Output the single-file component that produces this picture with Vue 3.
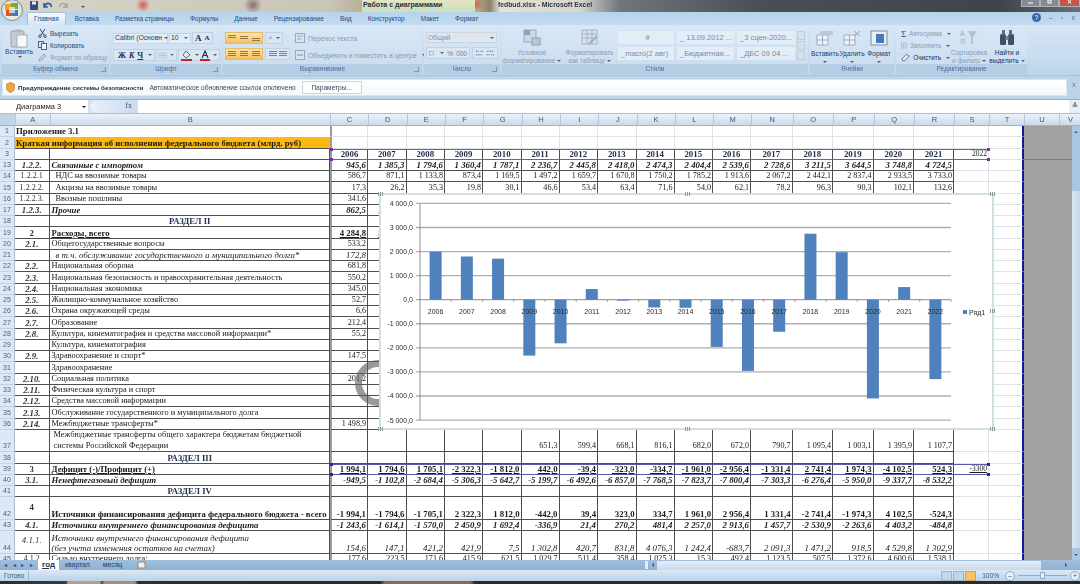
<script setup>
const split = (s) => s.split('|')

const letters = 'ABCDEFGHIJKLMNOPQRSTUV'.split('')
const tabs = ['Вставка', 'Разметка страницы', 'Формулы', 'Данные', 'Рецензирование', 'Вид', 'Конструктор', 'Макет', 'Формат']

const simple = (n, a, b, c, d) => ({ n, a, b, ka: 'bi', vals: [c || '', d || ''] })

const rows = [
  { n: 1, a: 'Приложение 3.1', ka: 'b', head: true, vals: [] },
  { n: 2, a: 'Краткая информация об исполнении федерального бюджета (млрд. руб)', ka: 'b', head: true, orange: true, vals: [] },
  { n: 3, vals: split('2006|2007|2008|2009|2010|2011|2012|2013|2014|2015|2016|2017|2018|2019|2020|2021'), kv: 'b navy', s: '2022' },
  { n: 13, a: '1.2.2.', ka: 'bi', b: 'Связанные с импортом', kb: 'bi', kv: 'bi', vals: split('945,6|1 385,3|1 794,6|1 360,4|1 787,1|2 236,7|2 445,8|2 418,0|2 474,3|2 404,4|2 539,6|2 728,6|3 211,5|3 644,5|3 748,8|4 724,5') },
  { n: 14, a: '1.2.2.1', b: 'НДС на ввозимые товары', kb: 'ind', vals: split('586,7|871,1|1 133,8|873,4|1 169,5|1 497,2|1 659,7|1 670,8|1 750,2|1 785,2|1 913,6|2 067,2|2 442,1|2 837,4|2 933,5|3 733,0') },
  { n: 15, a: '1.2.2.2.', b: 'Акцизы на ввозимые товары', kb: 'ind', vals: split('17,3|26,2|35,3|19,8|30,1|46,6|53,4|63,4|71,6|54,0|62,1|78,2|96,3|90,3|102,1|132,6') },
  { n: 16, a: '1.2.2.3.', b: 'Ввозные пошлины', kb: 'ind', vals: ['341,6', '5 000,0'] },
  { n: 17, a: '1.2.3.', ka: 'bi', b: 'Прочие', kb: 'bi', kv: 'bi', vals: ['862,5', '1 000,0'] },
  { n: 18, sec: 'РАЗДЕЛ II', vals: [] },
  { n: 19, a: '2', ka: 'b', b: 'Расходы, всего', kb: 'b u', kv: 'b u', vals: ['4 284,8', '5 000,0'] },
  simple(20, '2.1.', 'Общегосударственные вопросы', '533,2'),
  { n: 21, b: 'в т.ч. обслуживание государственного и муниципального долга*', kb: 'i ind', kv: 'i', vals: ['172,8'] },
  simple(22, '2.2.', 'Национальная оборона', '681,8'),
  simple(23, '2.3.', 'Национальная безопасность и правоохранительная деятельность', '550,2'),
  simple(24, '2.4.', 'Национальная экономика', '345,0'),
  simple(25, '2.5.', 'Жилищно-коммунальное хозяйство', '52,7'),
  simple(26, '2.6.', 'Охрана окружающей среды', '6,6'),
  simple(27, '2.7.', 'Образование', '212,4'),
  simple(28, '2.8.', 'Культура, кинематография и средства массовой информации*', '55,2'),
  { n: 29, b: 'Культура, кинематография', vals: [] },
  simple(30, '2.9.', 'Здравоохранение и спорт*', '147,5'),
  { n: 31, b: 'Здравоохранение', vals: [] },
  simple(32, '2.10.', 'Социальная политика', '201,2'),
  simple(33, '2.11.', 'Физическая культура и спорт'),
  simple(34, '2.12.', 'Средства массовой информации'),
  simple(35, '2.13.', 'Обслуживание государственного и муниципального долга'),
  simple(36, '2.14.', 'Межбюджетные трансферты*', '1 498,9'),
  { n: 37, tall: true, b: 'Межбюджетные трансферты общего характера бюджетам бюджетной\nсистемы Российской Федерации', kb: 'ind2', vals: split('|||||651,3|599,4|668,1|816,1|682,0|672,0|790,7|1 095,4|1 003,1|1 395,9|1 107,7') },
  { n: 38, sec: 'РАЗДЕЛ III', vals: [] },
  { n: 39, a: '3', ka: 'b', b: 'Дефицит (-)/Профицит (+)', kb: 'b u', kv: 'b u', s: '-3300', su: true, vals: split('1 994,1|1 794,6|1 705,1|-2 322,3|-1 812,0|442,0|-39,4|-323,0|-334,7|-1 961,0|-2 956,4|-1 331,4|2 741,4|1 974,3|-4 102,5|524,3') },
  { n: 40, a: '3.1.', ka: 'bi', b: 'Ненефтегазовый дефицит', kb: 'bi', kv: 'bi', vals: split('-949,5|-1 102,8|-2 684,4|-5 306,3|-5 642,7|-5 199,7|-6 492,6|-6 857,0|-7 768,5|-7 823,7|-7 800,4|-7 303,3|-6 276,4|-5 950,0|-9 337,7|-8 532,2') },
  { n: 41, sec: 'РАЗДЕЛ IV', vals: [] },
  { n: 42, tall: true, mid: true, a: '4', ka: 'b', b: 'Источники финансирования дефицита федерального бюджета - всего', kb: 'b', kv: 'b', vals: split('-1 994,1|-1 794,6|-1 705,1|2 322,3|1 812,0|-442,0|39,4|323,0|334,7|1 961,0|2 956,4|1 331,4|-2 741,4|-1 974,3|4 102,5|-524,3') },
  { n: 43, a: '4.1.', ka: 'bi', b: 'Источники внутреннего финансирования дефицита', kb: 'bi', kv: 'bi', vals: split('-1 243,6|-1 614,1|-1 570,0|2 450,9|1 692,4|-336,9|21,4|270,2|481,4|2 257,0|2 913,6|1 457,7|-2 530,9|-2 263,6|4 403,2|-484,8') },
  { n: 44, tall: true, mid: true, a: '4.1.1.', ka: 'i', b: 'Источники внутреннего финансирования дефицита\n(без учета изменения остатков на счетах)', kb: 'i', kv: 'i', vals: split('154,6|147,1|421,2|421,9|7,5|1 302,8|420,7|831,8|4 076,3|1 242,4|-683,7|2 091,3|1 471,2|918,5|4 529,8|1 302,9') },
  { n: 45, a: '4.1.2', b: 'Сальдо внутреннего долга:', vals: split('177,6|223,5|171,6|415,9|621,5|1 029,7|511,4|358,4|1 025,3|15,3|492,4|1 123,5|507,5|1 372,6|4 600,6|1 538,1') },
]

// chart: row 39 plotted per year, coordinates inside the 615x237 frame
const series = [1994.1, 1794.6, 1705.1, -2322.3, -1812, 442, -39.4, -323, -334.7, -1961, -2956.4, -1331.4, 2741.4, 1974.3, -4102.5, 524.3, -3300]
const plotLeft = 41
const plotRight = 572
const zero = 106.7
const scale = 0.02407
const step = (plotRight - plotLeft) / series.length
const yOf = (v) => zero - v * scale
const axis = [4000, 3000, 2000, 1000, 0, -1000, -2000, -3000, -4000, -5000]
const axisLabel = (v) => {
  const abs = Math.abs(v)
  const txt = abs >= 1000 ? `${abs / 1000} 000,0` : '0,0'
  return v < 0 ? `-${txt}` : txt
}
const bars = series.map((v, i) => ({
  year: 2006 + i,
  cx: plotLeft + step * (i + 0.5),
  y: v > 0 ? yOf(v) : zero,
  h: Math.abs(v) * scale,
}))
</script>

<template>
  <div class="app">
    <div class="titlebar">
      <svg class="qa" width="60" height="11" viewBox="0 0 60 11">
        <rect x="1" y="1" width="8" height="9" rx="1" fill="#31507f" />
        <rect x="3" y="1.5" width="4" height="3" fill="#e8eef6" />
        <path d="M15 3 L15 7 L19 7 M15.5 6.5 C17 2 22 2.5 22.5 7" fill="none" stroke="#2a5ea8" stroke-width="1.6" />
        <path d="M38 3 L38 7 L34 7 M37.5 6.5 C36 2 31 2.5 30.5 7" fill="none" stroke="#9aa3ae" stroke-width="1.4" />
        <path d="M52 6 h4 l-2 2z" fill="#456" />
      </svg>
      <span class="contextual">Работа с диаграммами</span>
      <span class="doc">fedbud.xlsx - Microsoft Excel</span>
      <div class="winbtns">
        <span class="wb"><svg width="7" height="5" viewBox="0 0 7 5"><path d="M1 3h5" stroke="#fff" /></svg></span>
        <span class="wb"><svg width="7" height="5" viewBox="0 0 7 5"><rect x="2" y="0" width="3" height="3" fill="none" stroke="#fff" /></svg></span>
        <span class="wb wb-x"><svg width="7" height="5" viewBox="0 0 7 5"><path d="M2 0 L5 3.5 M5 0 L2 3.5" stroke="#fff" /></svg></span>
      </div>
    </div>

    <div class="tabrow">
      <span class="tab active">Главная</span>
      <span v-for="t in tabs" :key="t" class="tab">{{ t }}</span>
      <div class="tab-right">
        <span class="help">?</span>
        <span>–</span>
        <span>▫</span>
        <span>x</span>
      </div>
    </div>

    <div class="ribbon">
      <section class="group g-clip">
        <div class="g-body clip-body">
          <div class="bigbtn paste">
            <svg width="18" height="19" viewBox="0 0 18 19">
              <rect x="1" y="2" width="13" height="16" rx="1" fill="#c8ccd2" stroke="#9ba3ad" />
              <rect x="5" y="0.5" width="6" height="3" fill="#aeb4bc" />
              <rect x="7" y="6" width="10" height="12" fill="#f7f8fa" stroke="#a9b0ba" />
            </svg>
            <span>Вставить</span>
            <i class="caret"></i>
          </div>
          <div class="smalls">
            <div class="small">
              <svg width="9" height="9" viewBox="0 0 9 9"><path d="M2 0 L6 6 M7 0 L3 6" stroke="#33517c" stroke-width="1" /><circle cx="2" cy="7.2" r="1.3" fill="none" stroke="#33517c" /><circle cx="7" cy="7.2" r="1.3" fill="none" stroke="#33517c" /></svg>
              Вырезать
            </div>
            <div class="small">
              <svg width="9" height="9" viewBox="0 0 9 9"><rect x="0.5" y="0.5" width="5" height="6" fill="#dce6f2" stroke="#48648c" /><rect x="3.5" y="2.5" width="5" height="6" fill="#f4f7fb" stroke="#48648c" /></svg>
              Копировать
            </div>
            <div class="small off">
              <svg width="9" height="9" viewBox="0 0 9 9"><path d="M6 1 L8 3 L4 7 L1 8 L2 5z" fill="#c9ced6" stroke="#8a93a0" stroke-width="0.7" /></svg>
              Формат по образцу
            </div>
          </div>
        </div>
        <div class="g-label">Буфер обмена<i class="launch"></i></div>
      </section>

      <section class="group g-font">
        <div class="g-body stack">
          <div class="line">
            <span class="combo w-font">Calibri (Основн<i class="caret"></i></span>
            <span class="combo w-size">10<i class="caret"></i></span>
            <span class="btnset"><b class="grow">A</b><b class="shrink">A</b></span>
          </div>
          <div class="line">
            <span class="btnset fmt"><b>Ж</b><b class="it">К</b><b class="ul">Ч</b><i class="caret"></i></span>
            <span class="btnset off-set">
              <svg width="13" height="9" viewBox="0 0 13 9"><path d="M1 .5h11v8H1zM6.5 .5v8M1 4.5h11" fill="none" stroke="#9fb0c4" /></svg>
              <i class="caret"></i>
            </span>
            <span class="btnset">
              <svg width="11" height="11" viewBox="0 0 11 11"><path d="M5 1 L9 5 L5 8 L2 5z" fill="#e7edf5" stroke="#5a6f8c" /><rect x="0" y="9" width="11" height="2" fill="#c0292a" /></svg>
              <i class="caret"></i>
              <svg width="10" height="11" viewBox="0 0 10 11"><path d="M2 8 L5 1 L8 8 M3.3 5.5h3.4" fill="none" stroke="#1d3560" stroke-width="1.2" /><rect x="0" y="9" width="10" height="2" fill="#d01c1f" /></svg>
              <i class="caret"></i>
            </span>
          </div>
        </div>
        <div class="g-label">Шрифт<i class="launch"></i></div>
      </section>

      <section class="group g-align">
        <div class="g-body align-body">
          <div class="stack align-main">
            <div class="line">
              <span class="oranges">
                <i v-for="k in 3" :key="k" class="lines" :class="`v${k}`"></i>
              </span>
              <span class="btnset angle">
                <svg width="12" height="8" viewBox="0 0 12 8"><path d="M1 7 L7 1 M4 1 H8 M3 4 L10 4" stroke="#5a7090" fill="none" /></svg>
                <i class="caret"></i>
              </span>
            </div>
            <div class="line">
              <span class="oranges">
                <i v-for="k in 3" :key="k" class="lines h"></i>
              </span>
              <span class="btnset indent"><i class="lines h pale"></i><i class="lines h pale"></i></span>
            </div>
          </div>
          <div class="align-sep"></div>
          <div class="stack align-wrap">
            <div class="small off tall-row">
              <svg width="10" height="10" viewBox="0 0 10 10"><rect x="0.5" y="0.5" width="9" height="9" fill="#d9e4f0" stroke="#99a8bb" /><path d="M2 3h6M2 6h4" stroke="#99a8bb" /></svg>
              Перенос текста
            </div>
            <div class="small off tall-row">
              <svg width="10" height="10" viewBox="0 0 10 10"><rect x="0.5" y="0.5" width="9" height="9" fill="#d9e4f0" stroke="#99a8bb" /><path d="M2 5h6" stroke="#7f90a6" /></svg>
              Объединить и поместить в центре<i class="caret"></i>
            </div>
          </div>
        </div>
        <div class="g-label">Выравнивание<i class="launch"></i></div>
      </section>

      <section class="group g-num">
        <div class="g-body stack num-body">
          <span class="combo w-num off">Общий<i class="caret"></i></span>
          <div class="line num-line">
            <span class="btnset num-fmt off">
              <svg width="11" height="9" viewBox="0 0 11 9"><rect x="0.5" y="1" width="7" height="6" fill="#dfe7f1" stroke="#8a9bb1" /></svg>
              <i class="caret"></i><em>%</em><em>000</em>
            </span>
            <span class="btnset num-dec">
              <svg width="10" height="9" viewBox="0 0 10 9"><path d="M1 2h3M6 2h3M1 6h8" stroke="#1f4f8f" stroke-dasharray="1 1" /></svg>
              <svg width="10" height="9" viewBox="0 0 10 9"><path d="M1 2h8M1 6h3M6 6h3" stroke="#1f4f8f" stroke-dasharray="1 1" /></svg>
            </span>
          </div>
        </div>
        <div class="g-label">Число<i class="launch"></i></div>
      </section>

      <section class="group g-styles">
        <div class="g-body styles-body">
          <div class="bigbtn lab off cond">
            <svg width="18" height="17" viewBox="0 0 18 17"><rect x="1" y="1" width="12" height="12" fill="#ccd7e4" stroke="#9aa9bb" /><rect x="1" y="1" width="6" height="5" fill="#8da2bc" /><rect x="9" y="9" width="8" height="7" fill="#b9c8d9" stroke="#8e9eb1" /></svg>
            <span>Условное<br />форматирование<i class="caret"></i></span>
          </div>
          <div class="bigbtn lab off tbl">
            <svg width="18" height="17" viewBox="0 0 18 17"><path d="M1 1h15v14H1zM1 5h15M1 9h15M6 1v14M11 1v14" fill="#d7e1ec" stroke="#a3b2c4" /><path d="M8 15 L16 7" stroke="#9cb0c6" stroke-width="2" /></svg>
            <span>Форматировать<br />как таблицу<i class="caret"></i></span>
          </div>
          <div class="cellstyles">
            <span class="cs center">#</span>
            <span class="cs">_ 13.09.2012 ...</span>
            <span class="cs">_3 сцен-2020...</span>
            <span class="cs">_macro(2 авг)</span>
            <span class="cs">_Бюджетная...</span>
            <span class="cs">_ДБС 09 04 ...</span>
          </div>
          <div class="styles-scroll"><i></i><i></i><i></i></div>
        </div>
        <div class="g-label">Стили</div>
      </section>

      <section class="group g-cells">
        <div class="g-body cells-body">
          <div class="bigbtn lab mini">
            <svg width="18" height="16" viewBox="0 0 18 16"><path d="M1 5h11v10H1zM1 10h11M6.5 5v10" fill="#f0f4f9" stroke="#9aacc3" /><rect x="4" y="1" width="13" height="4" fill="#b8c7d9" /></svg>
            <span>Вставить</span><i class="caret"></i>
          </div>
          <div class="bigbtn lab mini">
            <svg width="18" height="16" viewBox="0 0 18 16"><path d="M1 5h11v10H1zM1 10h11M6.5 5v10" fill="#f0f4f9" stroke="#9aacc3" /><path d="M11 1 L17 6 M17 1 L11 6" stroke="#8da0b7" /></svg>
            <span>Удалить</span><i class="caret"></i>
          </div>
          <div class="bigbtn lab mini">
            <svg width="18" height="16" viewBox="0 0 18 16"><rect x="1" y="1" width="16" height="14" fill="#e9eef5" stroke="#7d8ea5" /><rect x="6" y="4" width="8" height="9" fill="#4477bb" /></svg>
            <span>Формат</span><i class="caret"></i>
          </div>
        </div>
        <div class="g-label">Ячейки</div>
      </section>

      <section class="group g-edit">
        <div class="g-body edit-body">
          <div class="smalls edit-col">
            <div class="small off"><em class="sigma">Σ</em> Автосумма<i class="caret"></i></div>
            <div class="small off">
              <svg width="9" height="9" viewBox="0 0 9 9"><rect x="0.5" y="0.5" width="8" height="8" fill="#dce5ef" stroke="#98a8bc" /><path d="M4.5 2v4M3 4.5 L4.5 6 L6 4.5" stroke="#5f86b8" fill="none" /></svg>
              Заполнить<i class="caret"></i>
            </div>
            <div class="small dark">
              <svg width="10" height="9" viewBox="0 0 10 9"><path d="M1 6 L6 1 L9 3 L4 8 H2z" fill="#f0f3f7" stroke="#56677e" /></svg>
              Очистить<i class="caret"></i>
            </div>
          </div>
          <div class="bigbtn lab off sort">
            <svg width="18" height="17" viewBox="0 0 18 17"><path d="M8 2 H17 L13 8 V15 H11 V8z" fill="#b4c2d2" /><text x="0" y="7" class="az">А</text><text x="0" y="15" class="az">Я</text></svg>
            <span>Сортировка<br />и фильтр<i class="caret"></i></span>
          </div>
          <div class="bigbtn lab find">
            <svg width="18" height="17" viewBox="0 0 18 17"><rect x="2" y="5" width="6" height="11" rx="1.5" fill="#3f4f66" /><rect x="10" y="5" width="6" height="11" rx="1.5" fill="#3f4f66" /><rect x="4" y="1" width="3" height="5" fill="#5d6d84" /><rect x="11" y="1" width="3" height="5" fill="#5d6d84" /><rect x="7.5" y="7" width="3" height="4" fill="#7b8799" /></svg>
            <span>Найти и<br />выделить<i class="caret"></i></span>
          </div>
        </div>
        <div class="g-label">Редактирование</div>
      </section>
    </div>

    <div class="security">
      <div class="sec-box">
        <svg width="9" height="11" viewBox="0 0 9 11"><path d="M4.5 .5 L8.5 2 V6 C8.5 8.5 6 10 4.5 10.5 C3 10 .5 8.5 .5 6 V2z" fill="#eda53a" stroke="#a77b34" stroke-width="0.6" /></svg>
        <b>Предупреждение системы безопасности</b>
        <span>Автоматическое обновление ссылок отключено</span>
        <button class="sec-btn">Параметры...</button>
      </div>
      <span class="sec-x">x</span>
    </div>

    <div class="formula">
      <div class="namebox">Диаграмма 3<i class="caret dark"></i></div>
      <div class="fxpill"><i>fx</i></div>
      <div class="fx-input"></div>
      <div class="fx-more">≚</div>
    </div>

    <div class="colhead gridcols">
      <div class="corner"></div>
      <div v-for="l in letters" :key="l" class="colname">{{ l }}</div>
    </div>

    <div class="sheet">
      <div class="grid-area">
        <div
          v-for="r in rows"
          :key="r.n"
          class="row gridcols"
          :class="{ tall: r.tall, mid: r.mid }"
        >
          <div class="rh">{{ r.n }}</div>
          <template v-if="r.head">
            <div class="cell headcell" :class="[r.ka, { orange: r.orange }]">{{ r.a }}</div>
          </template>
          <template v-else>
            <div class="cell ca" :class="r.ka">{{ r.a }}</div>
            <div v-if="r.sec" class="cell cb sect">{{ r.sec }}</div>
            <div v-else class="cell cb" :class="r.kb">{{ r.b }}</div>
          </template>
          <div
            v-for="i in 16"
            :key="i"
            class="cell num"
            :class="[r.kv, { c1: i === 1, free: r.head }]"
          >{{ r.vals[i - 1] }}</div>
          <div class="cell free cs2" :class="{ und: r.su }">{{ r.s }}</div>
          <div class="cell free ct"></div>
          <div class="cell gray"></div>
        </div>

        <div class="pagebreak-line"></div>
        <div class="range range-purple"><i></i><i></i><i></i><i></i></div>
        <div class="range range-blue"><i></i><i></i><i></i><i></i></div>
        <div class="ring"></div>

        <div class="chart">
          <svg width="615" height="237" viewBox="0 0 615 237">
            <line v-for="v in axis" :key="v" :x1="plotLeft - 4" :x2="plotRight" :y1="yOf(v)" :y2="yOf(v)" class="gl" :class="{ zero: v === 0 }" />
            <line :x1="plotLeft" :x2="plotLeft" :y1="yOf(4000)" :y2="yOf(-5000)" class="ax" />
            <text v-for="v in axis" :key="'t' + v" x="34" :y="yOf(v) + 2.5" class="yl">{{ axisLabel(v) }}</text>
            <line v-for="b in bars" :key="'k' + b.year" :x1="b.cx + step / 2" :x2="b.cx + step / 2" :y1="zero" :y2="zero + 2" class="ax" />
            <rect v-for="b in bars" :key="'r' + b.year" :x="b.cx - 6" :y="b.y" width="12" :height="b.h" fill="#4f81bd" />
            <text v-for="b in bars" :key="'y' + b.year" :x="b.cx" :y="zero + 14.5" class="xl">{{ b.year }}</text>
            <rect x="584" y="117" width="4" height="4" fill="#4f81bd" />
            <text x="590" y="122" class="lg">Ряд1</text>
          </svg>
          <i class="grip g-tl"></i><i class="grip g-tr"></i><i class="grip g-bl"></i><i class="grip g-br"></i>
          <i class="grip g-t"></i><i class="grip g-b"></i><i class="grip g-r"></i>
        </div>
      </div>

      <div class="vscroll">
        <i class="arrow-up"></i>
        <div class="vthumb"></div>
        <i class="arrow-down"></i>
      </div>
    </div>

    <div class="sheettabs">
      <div class="navs">
        <span>◂</span><span>◂</span><span>▸</span><span>▸</span>
      </div>
      <span class="st st-active">год</span>
      <span class="st">квартал</span>
      <span class="st">месяц</span>
      <span class="st st-new">
        <svg width="9" height="8" viewBox="0 0 9 8"><rect x="1" y="1" width="7" height="6" fill="#eef2f7" stroke="#9a8a6a" /><path d="M6 0 L8 2" stroke="#d28d22" /></svg>
      </span>
      <div class="hscroll">
        <i class="split"></i>
        <i class="ha"></i>
        <div class="hthumb"></div>
        <i class="ha ha-r"></i>
      </div>
    </div>

    <div class="status">
      <span class="ready">Готово</span>
      <div class="status-right">
        <span class="viewbtn"></span><span class="viewbtn"></span><span class="viewbtn on"></span>
        <span class="zoom">100%</span>
        <span class="zbtn">–</span>
        <div class="slider"><i></i></div>
        <span class="zbtn">+</span>
      </div>
    </div>

    <div class="taskbar"></div>

    <div class="office">
      <svg width="14" height="14" viewBox="0 0 14 14">
        <rect x="0" y="1" width="6" height="6" fill="#f29b1d" />
        <rect x="6" y="0" width="7" height="6" fill="#6fae3d" />
        <rect x="1" y="7" width="6" height="6" fill="#d9532c" />
        <rect x="7" y="7" width="6" height="6" fill="#3d79c4" />
        <rect x="4" y="4" width="6" height="6" fill="#f4f5f0" opacity=".7" />
      </svg>
    </div>
  </div>
</template>

<style>
html, body { margin: 0; background: #fff; overflow: hidden; }
</style>

<style scoped>
.app {
  width: 1080px;
  height: 584px;
  position: relative;
  overflow: hidden;
  display: flex;
  flex-direction: column;
  font-family: "Liberation Sans", Arial, sans-serif;
  font-size: 6.6px;
  color: #1f3b63;
  filter: blur(0.4px);
}
i, em { font-style: normal; }

.titlebar {
  height: 12px;
  flex: none;
  position: relative;
  display: flex;
  align-items: center;
  background:
    radial-gradient(circle at 143px 5px, #d85a50 0, transparent 7px),
    radial-gradient(circle at 253px 5px, #8a6f70 0, transparent 9px),
    radial-gradient(circle at 476px 4px, #d5624e 0, transparent 7px),
    linear-gradient(90deg, #d8d5c8 0, #c9c5b9 330px, #b8b29a 360px, #dcd8b8 400px, #c6c0a2 470px, #8d8268 490px, #e4e2d6 500px, #d8d6cc 580px, #70767c 620px, #4a4f57 760px, #3f444c 1000px, #6b7078 1080px);
}
.qa { position: absolute; left: 29px; top: 0; }
.contextual {
  position: absolute;
  left: 362px;
  top: 0;
  width: 112px;
  height: 12px;
  line-height: 10px;
  font-size: 7px;
  font-weight: 700;
  color: #27303a;
  padding-left: 1px;
  background: linear-gradient(#e6e4bf, #c8dfc0);
  white-space: nowrap;
}
.doc {
  position: absolute;
  left: 498px;
  top: 0;
  line-height: 10px;
  font-size: 6.8px;
  font-weight: 700;
  color: #2d3540;
  white-space: nowrap;
}
.winbtns {
  position: absolute;
  right: 0;
  top: 0;
  display: flex;
}
.wb {
  width: 19px;
  height: 7px;
  border: 1px solid #aeb3ba;
  border-top: 0;
  box-sizing: border-box;
  background: #858b93;
  display: flex;
  justify-content: center;
}
.wb-x { width: 21px; background: #c85448; }

.tabrow {
  height: 13px;
  flex: none;
  display: flex;
  align-items: flex-end;
  background: linear-gradient(#b6d3ea, #c3dbf0);
  padding-left: 27px;
  position: relative;
}
.tab {
  height: 12px;
  line-height: 11px;
  padding: 0 8px;
  color: #1d4a86;
  font-size: 6.5px;
  white-space: nowrap;
}
.tab.active {
  background: linear-gradient(#f5fafd, #d7e7f5);
  border: 1px solid #a5c2dd;
  border-bottom: 0;
  border-radius: 2px 2px 0 0;
  padding: 0 6px;
  margin-right: 1px;
}
.tab-right {
  position: absolute;
  left: 1032px;
  top: 1px;
  display: flex;
  gap: 8px;
  color: #596f8c;
  font-size: 7px;
  line-height: 10px;
}
.help {
  width: 9px;
  height: 9px;
  border-radius: 50%;
  background: #3a66ad;
  color: #fff;
  text-align: center;
  line-height: 9px;
}

.ribbon {
  height: 51px;
  flex: none;
  display: flex;
  gap: 2px;
  padding: 1px 2px 1px;
  box-sizing: border-box;
  background: linear-gradient(#d6e6f4, #bdd6ec);
  border-bottom: 1px solid #a7c0d8;
}
.group {
  display: flex;
  flex-direction: column;
  background: linear-gradient(#d9e7f5, #c8dcee);
  border-radius: 2px;
}
.g-clip { width: 107px; }
.g-font { width: 110px; }
.g-align { width: 199px; }
.g-num { width: 76px; }
.g-styles { width: 306px; }
.g-cells { width: 84px; }
.g-edit { width: 131px; }
.g-body { flex: 1; min-height: 0; }
.g-label {
  height: 10px;
  line-height: 10px;
  flex: none;
  text-align: center;
  font-size: 6.6px;
  color: #4b6c96;
  background: #b4cee6;
  position: relative;
  border-radius: 0 0 2px 2px;
}
.launch {
  position: absolute;
  right: 3px;
  top: 3px;
  width: 4px;
  height: 4px;
  border: 1px solid #7c97b6;
  border-top: 0;
  border-left: 0;
}
.caret {
  display: inline-block;
  width: 0;
  height: 0;
  border: 2px solid transparent;
  border-top-color: #4a5f7c;
  border-bottom: 0;
  margin-left: 2px;
  vertical-align: middle;
}
.caret.dark { border-top-color: #111; border-width: 2.5px; border-bottom: 0; margin-left: 21px; }

.bigbtn {
  display: flex;
  flex-direction: column;
  align-items: center;
  text-align: center;
  line-height: 7.5px;
  font-size: 6.6px;
  white-space: nowrap;
}
.paste { width: 34px; padding-top: 3px; color: #2d4a73; }
.clip-body { display: flex; }
.smalls { display: flex; flex-direction: column; gap: 3px; padding: 3px 0 0 2px; }
.small {
  display: flex;
  align-items: center;
  gap: 3px;
  height: 9px;
  font-size: 6.4px;
  white-space: nowrap;
  color: #2b4a75;
}
.small.off { color: #8b9bb0; }
.small.dark { color: #23344e; }

.stack { display: flex; flex-direction: column; }
.line { display: flex; align-items: center; gap: 1px; }
.g-font .stack { padding: 6px 2px 0; gap: 4px; }
.combo {
  height: 11px;
  line-height: 10px;
  background: #e3edf7;
  border: 1px solid #c3d4e5;
  box-sizing: border-box;
  padding-left: 1px;
  font-size: 6.8px;
  color: #2b3a50;
  display: flex;
  align-items: center;
  justify-content: space-between;
  padding-right: 2px;
  white-space: nowrap;
}
.w-font { width: 55px; }
.w-size { width: 22px; }
.btnset {
  display: inline-flex;
  align-items: center;
  height: 12px;
  gap: 1px;
  background: #dae6f2;
  border: 1px solid #bfd1e3;
  box-sizing: border-box;
  padding: 0 2px;
  font-family: "Liberation Serif", serif;
  color: #1c2f4c;
  font-size: 8px;
}
.grow { font-size: 9px; }
.shrink { font-size: 7px; margin-left: 2px; }
.fmt { width: 43px; gap: 3px; padding-left: 4px; }
.fmt .it { font-style: italic; }
.fmt .ul { text-decoration: underline; }
.off-set { width: 21px; opacity: 0.8; }
.g-font .line + .line { margin-top: 1px; }

.align-body { display: flex; }
.align-main { padding: 6px 0 0 2px; gap: 4px; }
.align-main .line { gap: 2px; }
.oranges {
  display: inline-flex;
  width: 38px;
  height: 12px;
  background: linear-gradient(#fde3a4, #f7c15a);
  border: 1px solid #e4b96a;
  box-sizing: border-box;
  justify-content: space-around;
  align-items: center;
}
.lines {
  width: 8px;
  height: 6px;
  display: block;
  background: repeating-linear-gradient(#8b7a4f 0 1px, transparent 1px 2px);
}
.lines.v1 { margin-bottom: 3px; height: 4px; }
.lines.v2 { height: 4px; }
.lines.v3 { margin-top: 3px; height: 4px; }
.lines.pale { background: repeating-linear-gradient(#6d84a2 0 1px, transparent 1px 2px); }
.angle { width: 18px; }
.indent { width: 25px; justify-content: space-around; }
.align-sep { width: 1px; height: 32px; margin: 4px 3px 0 2px; background: #b6cade; }
.align-wrap { padding-top: 7px; gap: 7px; }
.small.tall-row { height: 10px; font-size: 6.8px; }

.num-body { padding: 6px 2px 0; gap: 4px; }
.w-num {
  width: 71px;
  background: #dfe6ee;
  border-color: #ccd6e1;
  color: #8b95a3;
}
.num-line { gap: 2px; }
.num-fmt {
  width: 44px;
  gap: 3px;
  font-family: "Liberation Sans", sans-serif;
  font-size: 6.5px;
  color: #6c7f98;
}
.num-dec { width: 26px; gap: 2px; }

.styles-body { display: flex; }
.cond { width: 60px; padding-top: 3px; }
.tbl { width: 55px; padding-top: 3px; }
.lab svg { margin-bottom: 3px; flex: none; }
.bigbtn.off { color: #8b9bb0; }
.cellstyles {
  display: grid;
  grid-template-columns: 56px 57px 58px;
  grid-auto-rows: 13px;
  gap: 3px 3px;
  padding: 5px 0 0 1px;
}
.cs {
  background: #e2edf8;
  font-family: "Liberation Sans", sans-serif;
  font-size: 7.5px;
  line-height: 13px;
  color: #7f8a98;
  padding-left: 3px;
  white-space: nowrap;
  overflow: hidden;
}
.cs.center { text-align: center; }
.styles-scroll {
  width: 8px;
  margin: 5px 0 0 2px;
  display: flex;
  flex-direction: column;
  gap: 1px;
}
.styles-scroll i { height: 9px; background: #d4e1ef; border: 1px solid #bccede; box-sizing: border-box; }

.cells-body { display: flex; justify-content: center; }
.mini { width: 27px; padding-top: 4px; color: #23406c; }
.mini svg { margin-bottom: 4px; }
.mini .caret { margin: 3px 0 0; }

.edit-body { display: flex; }
.edit-col { width: 49px; padding-left: 5px; }
.sigma { font-family: "Liberation Serif", serif; font-size: 9px; color: #2a4c7a; }
.sort { width: 38px; }
.find { width: 38px; color: #16325c; }
.sort, .find { padding-top: 3px; }
.az { font-size: 7px; fill: #9aa9bb; font-family: "Liberation Sans", sans-serif; }

.security {
  height: 24px;
  flex: none;
  box-sizing: border-box;
  padding: 3px 0 3px 2px;
  display: flex;
  background: #bdd3e8;
  border-bottom: 1px solid #95b1cc;
}
.sec-box {
  width: 1065px;
  background: linear-gradient(#fff, #f2f7fb);
  border: 1px solid #d9e5f0;
  box-sizing: border-box;
  display: flex;
  align-items: center;
  padding-left: 3px;
  color: #39485b;
  white-space: nowrap;
  font-size: 6.6px;
}
.sec-box b { margin-left: 3px; color: #1d2a3b; font-weight: 700; font-size: 6.2px; }
.sec-box span { margin-left: 6px; }
.sec-btn {
  margin-left: 6px;
  width: 60px;
  height: 13px;
  padding: 0;
  background: #fdfefe;
  border: 1px solid #c7d4e2;
  font: inherit;
  color: #39485b;
}
.sec-x { margin-left: 5px; color: #6a7f99; line-height: 12px; font-size: 8px; }

.formula {
  height: 14px;
  flex: none;
  box-sizing: border-box;
  display: flex;
  align-items: stretch;
  background: #d4e2f0;
  border-bottom: 1px solid #a9bfd4;
}
.namebox {
  width: 88px;
  box-sizing: border-box;
  padding-left: 16px;
  background: #fff;
  font-size: 7.5px;
  line-height: 13px;
  color: #222;
  white-space: nowrap;
}
.fxpill {
  width: 47px;
  box-sizing: border-box;
  margin-left: 2px;
  background: linear-gradient(90deg, #eaf1f8, #c9dbee);
  border-radius: 7px 0 0 7px;
  text-align: right;
  padding-right: 5px;
  line-height: 12px;
  font-family: "Liberation Serif", serif;
  font-style: italic;
  font-size: 8px;
  color: #36506f;
}
.fx-input { flex: 1; background: #fff; margin-left: 1px; }
.fx-more {
  width: 11px;
  text-align: center;
  background: #e6eef7;
  font-size: 7px;
  line-height: 12px;
  color: #333;
}

.gridcols {
  display: grid;
  grid-template-columns:
    15px 34.5px 280.5px 38px 38.5px 38.5px 38px 38.5px 38px 38.5px 38.5px 38px 38.5px 38px
    41.5px 40.5px 40.5px 40.5px 40px 35px 35px 35px 14px;
}
.colhead {
  height: 12px;
  flex: none;
  width: 1080px;
  grid-template-columns:
    15px 34.5px 280.5px 38px 38.5px 38.5px 38px 38.5px 38px 38.5px 38.5px 38px 38.5px 38px
    41.5px 40.5px 40.5px 40.5px 40px 35px 35px 35px 22px;
  background: linear-gradient(#edf2f9, #cbd9ea);
  border-bottom: 1px solid #9fb4cb;
  box-sizing: border-box;
}
.corner { background: #c2d3e6; }
.colname {
  text-align: center;
  line-height: 11px;
  color: #46566a;
  font-size: 7.5px;
  border-left: 1px solid #b4c6da;
  box-sizing: border-box;
  font-family: "Liberation Sans", sans-serif;
}

.sheet { flex: none; height: 434px; display: flex; overflow: hidden; }
.grid-area { width: 1072px; position: relative; overflow: hidden; flex: none; }

.row { height: 11.25px; font-family: "Liberation Serif", serif; font-size: 8.1px; color: #1a1a1a; }
.row.tall { height: 22.5px; }
.rh {
  background: #dde8f5;
  color: #4f6178;
  border-bottom: 1px solid #c4d3e4;
  border-right: 1px solid #a9bdd2;
  box-sizing: border-box;
  text-align: center;
  font-family: "Liberation Sans", sans-serif;
  font-size: 7px;
  line-height: 10px;
  display: flex;
  align-items: flex-end;
  justify-content: center;
}
.cell {
  box-sizing: border-box;
  border-right: 1px solid #4f4f4f;
  border-bottom: 1px solid #4f4f4f;
  display: flex;
  align-items: flex-end;
  line-height: 10px;
  white-space: pre;
  overflow: hidden;
  padding: 0 1px;
  background: #fff;
}
.ca { justify-content: center; color: #333; }
.mid .ca { align-items: center; padding-bottom: 3px; }
.cb { padding-left: 2px; font-size: 8.35px; }
.num { justify-content: flex-end; }
.c1 { border-left: 2px solid #9b9b9b; }
.free { border-color: #dfe3e8; }
.free.c1 { border-left: 2px solid #9b9b9b; }
.headcell {
  grid-column: span 2;
  overflow: visible;
  border-right-color: transparent;
  border-bottom-color: transparent;
}
.orange { background: #fdb813; border-bottom-color: #4f4f4f; }
.cell.b { font-weight: 700; font-size: 8.75px; }
.cell.i { font-style: italic; font-size: 8.85px; }
.cell.bi { font-weight: 700; font-style: italic; font-size: 8.8px; }
.u { text-decoration: underline; }
.ind { padding-left: 6px; }
.ind2 { padding-left: 4px; line-height: 11px; }
.cell.navy { color: #1d2c4c; font-size: 8.8px; justify-content: center; }
.sect {
  justify-content: center;
  font-weight: 700;
  color: #1d2f52;
  font-size: 8.7px;
}
.cs2 {
  justify-content: flex-end;
  font-family: "Liberation Serif", serif;
  font-size: 7.5px;
  padding-right: 1px;
}
.und { text-decoration: underline; }
.ct { border-right: 2px solid #1616a0; }
.gray { background: #a1a1a1; grid-column: span 2; border: 0; padding: 0; }
.pagebreak-line { position: absolute; left: 1024px; right: 0; top: 33px; height: 1px; background: #7f7f7f; }

.range {
  position: absolute;
  left: 331px;
  width: 658px;
  box-sizing: border-box;
  border-top: 1px solid;
  border-bottom: 1px solid;
  pointer-events: none;
}
.range i { position: absolute; width: 3px; height: 3px; background: currentColor; }
.range i:nth-child(1) { left: -1px; top: -2px; }
.range i:nth-child(2) { right: -1px; top: -2px; }
.range i:nth-child(3) { left: -1px; bottom: -2px; }
.range i:nth-child(4) { right: -1px; bottom: -2px; }
.range-purple { top: 22.5px; height: 11.25px; color: #7a2f9c; border-color: #8a4ea8; }
.range-blue { top: 337.5px; height: 11.25px; color: #2626a6; border-color: #5a5aa6; }

.ring {
  position: absolute;
  left: 355px;
  top: 234px;
  width: 46px;
  height: 46px;
  box-sizing: border-box;
  border: 7px solid rgba(100, 100, 100, 0.65);
  border-radius: 50%;
}

.chart {
  position: absolute;
  left: 379px;
  top: 67px;
  width: 615px;
  height: 237px;
  box-sizing: border-box;
  background: #fff;
  outline: 2px solid #cfdfe3;
  outline-offset: -2px;
}
.chart svg { display: block; }
.gl { stroke: #aeaeae; stroke-width: 1.3; }
.gl.zero { stroke: #8a8a8a; stroke-width: 1; }
.ax { stroke: #8f8f8f; stroke-width: 1; }
.yl, .xl, .lg {
  font-family: "Liberation Sans", sans-serif;
  font-size: 7px;
  fill: #2a2a2a;
}
.yl { text-anchor: end; }
.xl { text-anchor: middle; }
.grip {
  position: absolute;
  width: 5px;
  height: 4px;
  background: repeating-linear-gradient(90deg, #8b9a9f 0 1px, transparent 1px 2px);
}
.g-tl { left: -1px; top: -1px; }
.g-tr { right: -1px; top: -1px; }
.g-bl { left: -1px; bottom: -1px; }
.g-br { right: -1px; bottom: -1px; }
.g-t { left: 306px; top: -1px; }
.g-b { left: 306px; bottom: -1px; }
.g-r { right: -1px; top: 116px; }

.vscroll {
  width: 8px;
  flex: none;
  background: #a9c5e2;
  position: relative;
}
.vthumb {
  position: absolute;
  left: 0;
  right: 0;
  top: 65px;
  bottom: 12px;
  background: linear-gradient(90deg, #dbe7f4, #c3d7ec);
}
.arrow-up, .arrow-down { position: absolute; left: 2px; width: 0; height: 0; border: 2px solid transparent; }
.arrow-up { top: 3px; border-bottom-color: #3a5a86; }
.arrow-down { bottom: 2px; border-top-color: #3a5a86; }

.sheettabs {
  height: 10px;
  flex: none;
  display: flex;
  align-items: stretch;
  position: relative;
  background: linear-gradient(#a0bedd, #8fb1d4);
  font-size: 6.8px;
  color: #1f3d68;
}
.navs { width: 36px; display: flex; justify-content: space-around; padding-left: 1px; font-size: 6px; line-height: 10px; color: #2a4a76; box-sizing: border-box; }
.st { padding: 0 6px; line-height: 10px; margin-right: 1px; }
.st-active {
  background: #fff;
  font-weight: 700;
  font-size: 8px;
  color: #24344f;
  padding: 0 4px;
  margin-left: 2px;
  margin-right: 0;
  text-decoration: underline;
}
.st-new { display: flex; align-items: center; padding: 0 2px; margin-left: 6px; }
.hscroll {
  position: absolute;
  left: 643px;
  right: 0;
  top: 0;
  height: 10px;
  display: flex;
  align-items: center;
}
.split { width: 3px; height: 8px; background: #e8eef6; margin: 0 2px; }
.ha { width: 0; height: 0; border: 2.5px solid transparent; border-right-color: #31517c; margin-right: 3px; }
.ha-r { border-right-color: transparent; border-left-color: #31517c; margin: 0 0 0 24px; }
.hthumb { width: 384px; height: 9px; background: linear-gradient(#e4edf7, #c9daec); }

.status {
  height: 11px;
  flex: none;
  display: flex;
  align-items: center;
  justify-content: space-between;
  background: linear-gradient(#dbe8f5, #b9d2ea);
  font-size: 6.6px;
  color: #40587a;
  padding-left: 4px;
}
.ready { padding-right: 4px; border-right: 1px solid #9db6cf; line-height: 10px; }
.status-right { display: flex; align-items: center; height: 11px; }
.viewbtn { width: 9px; height: 8px; background: #c4d5e8; border: 1px solid #9fb4cc; margin-right: 1px; }
.viewbtn.on { background: #f6c562; border-color: #cfa555; }
.zoom { margin: 0 6px 0 5px; }
.zbtn {
  width: 8px;
  height: 8px;
  border-radius: 50%;
  border: 1px solid #8ea7c4;
  background: #e7eff8;
  line-height: 7px;
  text-align: center;
  font-size: 7px;
}
.slider { width: 49px; height: 1px; background: #93adc9; margin: 0 3px; position: relative; }
.slider i { position: absolute; left: 22px; top: -3px; width: 5px; height: 7px; background: #e8eff7; border: 1px solid #94aac4; box-sizing: border-box; }

.taskbar { flex: 1; background: linear-gradient(90deg, #2a2d30 0, #3a3d40 66px, #b99a88 68px, #b0a090 100px, #46403a 102px, #a88d7c 104px, #a09080 135px, #2f2f30 138px, #2a2a2c 380px, #8a6a54 385px, #8a6a54 470px, #2a2a2c 475px, #2a2a2c 1080px); }

.office {
  position: absolute;
  left: 1px;
  top: -1px;
  width: 22px;
  height: 22px;
  border-radius: 50%;
  display: flex;
  align-items: center;
  justify-content: center;
  background: radial-gradient(circle at 50% 60%, #fbfbf4, #dfe5dc 60%, #9fb0b5);
  border: 1px solid #7f8f9e;
  box-sizing: border-box;
}
</style>
